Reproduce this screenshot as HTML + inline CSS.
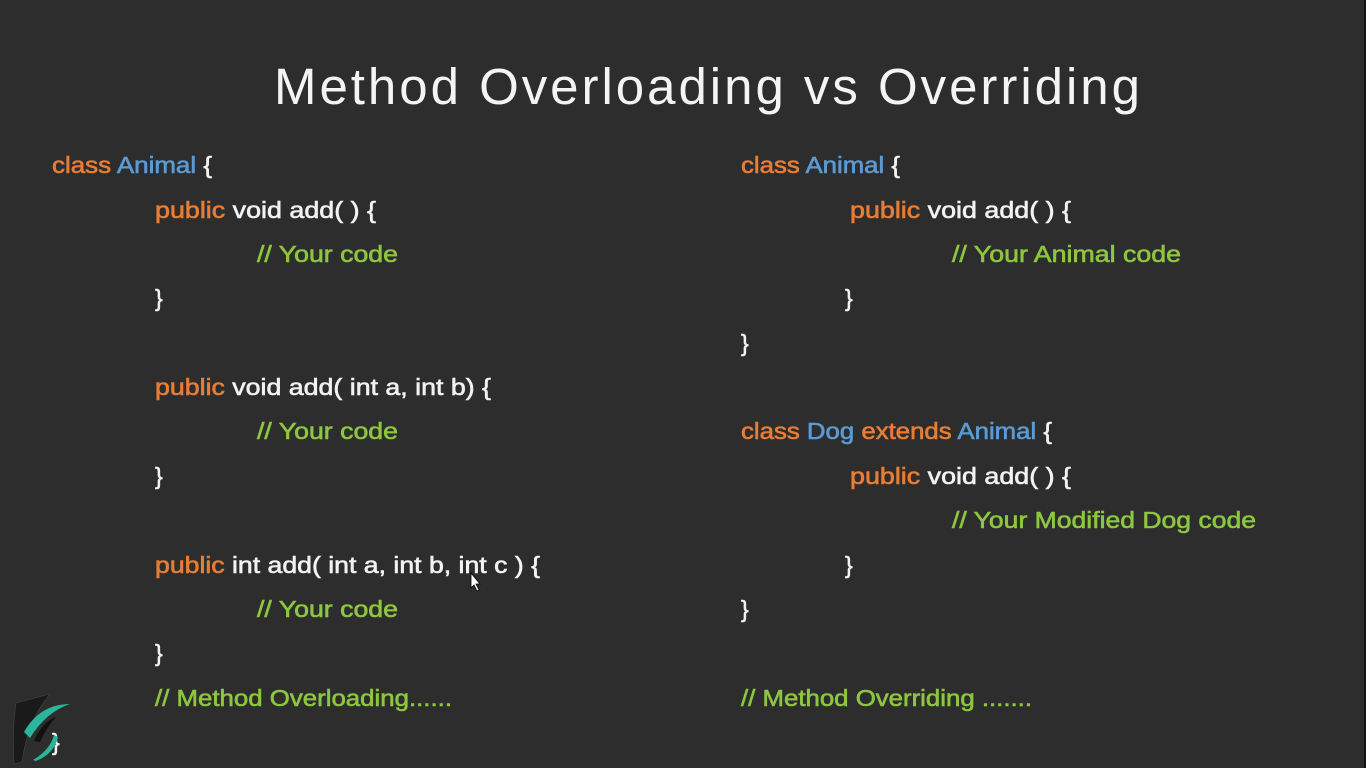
<!DOCTYPE html>
<html><head><meta charset="utf-8"><style>
html,body{margin:0;padding:0;background:#2d2d2d;width:1366px;height:768px;overflow:hidden}
svg{display:block}
text{font-family:"Liberation Sans",sans-serif;font-size:23px}
.o{fill:#e87d35;stroke:#e87d35}.b{fill:#5b9bd5;stroke:#5b9bd5}.w{fill:#f2f2f2;stroke:#f2f2f2}.g{fill:#8dc63f;stroke:#8dc63f}
.c text, .c tspan{stroke-width:0.6px}
</style></head><body>
<svg width="1366" height="768" viewBox="0 0 1366 768">
<rect width="1366" height="768" fill="#2d2d2d"/>
<rect x="1364" y="0" width="2" height="768" fill="#111"/>
<text x="274" y="104" textLength="866" lengthAdjust="spacing" style="font-size:51px" fill="#f4f4f4">Method Overloading vs Overriding</text>
<g class="c">
<text x="52" y="173" textLength="160" lengthAdjust="spacingAndGlyphs"><tspan class="o">class </tspan><tspan class="b">Animal </tspan><tspan class="w">{</tspan></text>
<text x="155" y="218" textLength="221" lengthAdjust="spacingAndGlyphs"><tspan class="o">public </tspan><tspan class="w">void add( ) {</tspan></text>
<text x="257" y="262" textLength="141" lengthAdjust="spacingAndGlyphs" class="g">// Your code</text>
<text x="155" y="306" class="w">}</text>
<text x="155" y="395" textLength="336" lengthAdjust="spacingAndGlyphs"><tspan class="o">public </tspan><tspan class="w">void add( int a, int b) {</tspan></text>
<text x="257" y="439" textLength="141" lengthAdjust="spacingAndGlyphs" class="g">// Your code</text>
<text x="155" y="484" class="w">}</text>
<text x="155" y="573" textLength="385" lengthAdjust="spacingAndGlyphs"><tspan class="o">public </tspan><tspan class="w">int add( int a, int b, int c ) {</tspan></text>
<text x="257" y="617" textLength="141" lengthAdjust="spacingAndGlyphs" class="g">// Your code</text>
<text x="155" y="661" class="w">}</text>
<text x="155" y="706" textLength="297" lengthAdjust="spacingAndGlyphs" class="g">// Method Overloading......</text>
<text x="52" y="750" class="w">}</text>

<text x="741" y="173" textLength="159" lengthAdjust="spacingAndGlyphs"><tspan class="o">class </tspan><tspan class="b">Animal </tspan><tspan class="w">{</tspan></text>
<text x="850" y="218" textLength="221" lengthAdjust="spacingAndGlyphs"><tspan class="o">public </tspan><tspan class="w">void add( ) {</tspan></text>
<text x="952" y="262" textLength="229" lengthAdjust="spacingAndGlyphs" class="g">// Your Animal code</text>
<text x="845" y="306" class="w">}</text>
<text x="741" y="351" class="w">}</text>
<text x="741" y="439" textLength="311" lengthAdjust="spacingAndGlyphs"><tspan class="o">class </tspan><tspan class="b">Dog </tspan><tspan class="o">extends </tspan><tspan class="b">Animal </tspan><tspan class="w">{</tspan></text>
<text x="850" y="484" textLength="221" lengthAdjust="spacingAndGlyphs"><tspan class="o">public </tspan><tspan class="w">void add( ) {</tspan></text>
<text x="952" y="528" textLength="304" lengthAdjust="spacingAndGlyphs" class="g">// Your Modified Dog code</text>
<text x="845" y="573" class="w">}</text>
<text x="741" y="617" class="w">}</text>
<text x="741" y="706" textLength="291" lengthAdjust="spacingAndGlyphs" class="g">// Method Overriding .......</text>
</g>
<!-- cursor -->
<path d="M471 573 L471 588 L474 585 L477 591 L479 590 L476 584 L480 584 Z" fill="#fff" stroke="#000" stroke-width="0.8"/>

<!-- logo -->
<path d="M16 703 L50 694 Q28 720 22 762 L14 764 Q12 730 16 703 Z" fill="#1a1a1a" stroke="#444" stroke-width="0.6"/>
<path d="M24 732 Q40 704 70 704 Q46 712 30 738 Z" fill="#2bb59c"/>
<path d="M34 741 Q42 722 56 717 Q46 728 40 742 Z" fill="#111"/>
<path d="M33 760 Q50 750 54 735 L58 737 Q54 754 36 761 Z" fill="#2bb59c"/>
</svg>
</body></html>
